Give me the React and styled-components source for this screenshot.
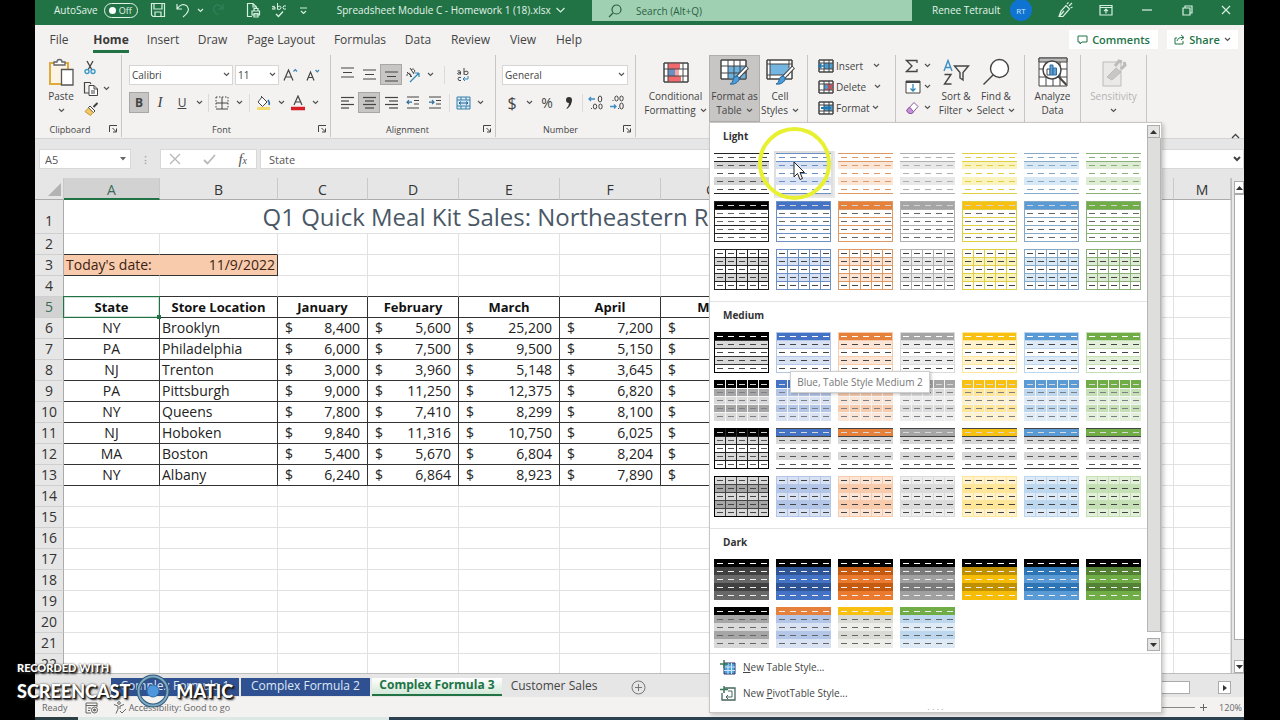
import * as React from 'react';
import styled, { css, createGlobalStyle } from 'styled-components'

const ui = "'Open Sans', 'Noto Sans', sans-serif";

const GlobalStyle = createGlobalStyle`
    * { box-sizing: border-box; }
    body { margin: 0; background: #000; font-family: ${ui}; overflow: hidden; }
    button, input, select { font: inherit; color: inherit; border: 0; padding: 0; margin: 0; background: none; }
`

/* ---------- data ---------- */

const palette = [
    { name: 'Black', c: '#000000', t1: '#d9d9d9', t2: '#a6a6a6', dark: '#404040', mid: '#686868', line: '#222222', soft: '#d4d4d4' },
    { name: 'Blue', c: '#4472c4', t1: '#d9e2f3', t2: '#b4c6e7', dark: '#2f5597', mid: '#4472c4', line: '#6c8fc4', soft: '#d9e2f3' },
    { name: 'Orange', c: '#e5813a', t1: '#fbe5d6', t2: '#f8cbad', dark: '#c55a11', mid: '#e97a30', line: '#dd9a66', soft: '#fbe5d6' },
    { name: 'Gray', c: '#a5a5a5', t1: '#ededed', t2: '#dbdbdb', dark: '#7b7b7b', mid: '#a0a0a0', line: '#b0b0b0', soft: '#e8e8e8' },
    { name: 'Gold', c: '#f8c010', t1: '#fff2cc', t2: '#ffe699', dark: '#bf9000', mid: '#f6bd08', line: '#dfcf45', soft: '#fbf3bd' },
    { name: 'Light Blue', c: '#5b9bd5', t1: '#deebf7', t2: '#bdd7ee', dark: '#2e75b6', mid: '#5b9bd5', line: '#86a9c6', soft: '#d8e9f5' },
    { name: 'Green', c: '#70ad47', t1: '#e2f0d9', t2: '#c5e0b4', dark: '#548235', mid: '#70ad47', line: '#8bb077', soft: '#dfecd5' }
];

const dark2 = [
    { name: 'Black', c: '#000000', t1: '#d9d9d9', t2: '#a6a6a6' },
    { name: 'Blue', c: '#e5813a', t1: '#d9e2f3', t2: '#b4c6e7' },
    { name: 'Gold', c: '#f8c010', t1: '#ededea', t2: '#dbdbd6' },
    { name: 'Green', c: '#70ad47', t1: '#deebf7', t2: '#bdd7ee' }
];

const lookOf = {
    light1: p => ({ rows: ['#fff', p.soft, '#fff', p.soft, '#fff'], dash: p.c === '#000000' ? '#555' : p.line, ends: p.line }),
    light2: p => ({ rows: [p.c, '#fff', '#fff', '#fff', '#fff'], dash: '#666', head: '#d4d4d4', lines: p.line, frame: p.line }),
    light3: p => ({ rows: ['#fff', p.soft, '#fff', p.soft, '#fff'], dash: '#444', lines: p.line, cols: p.line, frame: p.line }),
    medium1: p => ({ rows: [p.c, p.t1, '#fff', p.t1, '#fff'], dash: '#444', head: '#fff', lines: p.c === '#000000' ? '#333' : p.t2, frame: p.c === '#000000' ? p.c : p.t2 }),
    medium2: p => ({ rows: [p.c, p.t2, p.t1, p.t2, p.t1], dash: '#7c8086', head: '#d8d8d8', lines: '#f4f4f4', cols: '#f4f4f4' }),
    medium3: p => p.c === '#000000'
        ? { rows: [p.c, '#d9d9d9', '#fff', '#d9d9d9', '#fff'], dash: '#555', head: '#ccc', lines: '#222', cols: '#222', frame: '#000' }
        : { rows: [p.c, '#d9d9d9', '#fff', '#d9d9d9', '#fff'], dash: '#555', head: '#d8d8d8', ends: '#444' },
    medium4: p => ({ rows: [p.t1, p.t2, p.t1, p.t2, p.t1], dash: '#444', lines: p.c === '#000000' ? '#444' : p.t2, cols: p.c === '#000000' ? '#444' : p.t2, frame: p.c === '#000000' ? '#000' : p.t2 }),
    dark1: p => ({ rows: ['#000', p.dark, p.mid, p.dark, p.mid], dash: '#eee', head: '#fff' }),
    dark2: p => ({ rows: [p.c, p.t2, p.t1, p.t2, p.t1], dash: '#666', head: '#eee' })
};

const gallery = [
    { title: 'Light', kinds: ['light1', 'light2', 'light3'] },
    { title: 'Medium', kinds: ['medium1', 'medium2', 'medium3', 'medium4'] },
    { title: 'Dark', kinds: ['dark1', 'dark2'] }
];

const columns = [
    ['A', 96], ['B', 118], ['C', 90], ['D', 91], ['E', 101], ['F', 101], ['G', 101],
    ['H', 104], ['I', 104], ['J', 68], ['K', 68], ['L', 68], ['M', null]
];

const sales = [
    ['NY', 'Brooklyn', '8,400', '5,600', '25,200', '7,200'],
    ['PA', 'Philadelphia', '6,000', '7,500', '9,500', '5,150'],
    ['NJ', 'Trenton', '3,000', '3,960', '5,148', '3,645'],
    ['PA', 'Pittsburgh', '9,000', '11,250', '12,375', '6,820'],
    ['NY', 'Queens', '7,800', '7,410', '8,299', '8,100'],
    ['NJ', 'Hoboken', '9,840', '11,316', '10,750', '6,025'],
    ['MA', 'Boston', '5,400', '5,670', '6,804', '8,204'],
    ['NY', 'Albany', '6,240', '6,864', '8,923', '7,890']
];

/* ---------- icons ---------- */

const Svg = ({ w = 16, h = w, children, color = '#444', sw = 1, vb }) => (
    <svg width={w} height={h} viewBox={vb || `0 0 ${w} ${h}`} fill='none' stroke={color} strokeWidth={sw} aria-hidden='true'>{children}</svg>
);
const Chevron = ({ color = '#555' }) => <Svg w={7} h={5} color={color} sw={1.2}><path d='M1 1l2.5 2.5L6 1' /></Svg>;
const Bars = ({ rows }) => (
    <Svg w={14} h={14} sw={1.2}>
        {rows.map(([a, b], i) => <path key={i} d={`M${a} ${i * 3.5 + 1.5}H${b}`} />)}
    </Svg>
);
const V3 = ({ top }) => <Svg w={14} h={16} sw={1.2}><path d={`M1 ${top}H14M3 ${top + 4.5}H12M1 ${top + 9}H14`} /></Svg>;

const PasteIcon = () => (
    <Svg w={26} h={28} sw={1.3}>
        <path d='M3 5H20V26H2V5Z' fill='#fbf4e4' stroke='#e0a93c' strokeWidth='2' />
        <path d='M6 7V4h3a2.5 2.5 0 0 1 5 0h3v3Z' fill='#fff' stroke='#666' />
        <path d='M13.500 11.500H25V27H13.500Z' fill='#fff' stroke='#555' />
    </Svg>
);
const CutIcon = () => (
    <Svg w={12} h={15}><path d='M3 1l5 9M9 1L4 10' strokeWidth='1.3' /><circle cx='3' cy='11.500' r='2' stroke='#3c9ac4' strokeWidth='1.400' /><circle cx='9' cy='11.500' r='2' stroke='#3c9ac4' strokeWidth='1.400' /></Svg>
);
const CopyIcon = () => (
    <Svg w={16} h={16}><path d='M6 12H1.500V1.500H7L8 3' strokeWidth='1.200' /><path d='M6 4.500h5l3.500 3.500v6.500H6Z' fill='#fff' /><path d='M11 4.500V8h3.500M8 10h4M8 12h4' /></Svg>
);
const BrushIcon = () => (
    <Svg w={15} h={15}><path d='M13.500 1l-4 4' strokeWidth='2' /><path d='M6 4l5 5-1.500 1.500-5-5Z' fill='#fff' /><path d='M4.500 6L9 10.500 6.500 13.500 1 9.500Z' fill='#f1c96b' stroke='#c9952f' /></Svg>
);
const BordersIcon = () => (
    <Svg w={14} h={14}><path d='M1 1H13V13M1 1V13' strokeDasharray='1.500 1.500' /><path d='M1 13H13M7 1V13M1 7H13' /></Svg>
);
const FillIcon = () => (
    <Svg w={16} h={16}><path d='M6 2L11 7 6.500 11.500 2 7Z' fill='#fff' /><path d='M5 1l3 3' /><path d='M12 5q2 3 1 5' stroke='#2b6fa8' strokeWidth='1.600' /><path d='M1 13.500H14' stroke='#f3dc6d' strokeWidth='3' /></Svg>
);
const FontColorIcon = () => (
    <Svg w={16} h={16}><path d='M4 10L8 1l4 9M5.500 7h5' strokeWidth='1.200' /><path d='M1 13.500H15' stroke='#d61f26' strokeWidth='3.500' /></Svg>
);
const GrowIcon = ({ down }) => (
    <Svg w={16} h={16} sw={1.2}>
        <path d={down ? 'M2 13.500L5.500 5l3.500 8.500M3.200 10.500h4.800' : 'M1 13.500L5.500 3 10 13.500M2.500 10h6'} />
        <path d={down ? 'M10.500 3l1.800 1.800L14 3' : 'M10.500 4.500l1.800-1.800L14 4.500'} stroke='#3a83b5' />
    </Svg>
);
const AngleIcon = () => (
    <Svg w={16} h={16}><path d='M2 9a2 2 0 1 1 3 1M2 5l5 5M6 3a2 2 0 1 1 2 3M5 1l4 6' /><path d='M5 15L14 6M14 6h-4M14 6v4' stroke='#2e86b8' strokeWidth='1.200' /></Svg>
);
const WrapIcon = () => (
    <Svg w={14} h={15}>
        <path d='M1.500 4q3-1 3 1v2.500M4.500 5.500q-3 0-3 1.200t3 0M8 1v6.500M8 5q4-2 4 .8T8 7' />
        <path d='M5 10.500q-3-1-3 1.300T5 13.500' /><path d='M12 9v3H7M9 10l-2 2 2 2' stroke='#2e86b8' />
    </Svg>
);
const IndentIcon = ({ right }) => (
    <Svg w={14} h={13}><path d='M1 1H13M8 4.500H13M8 8H13M1 12H13' /><path d={right ? 'M1 6.200h5M4 4.200l2 2-2 2' : 'M6 6.200H1M3 4.200l-2 2 2 2'} stroke='#2e6f9e' strokeWidth='1.200' /></Svg>
);
const MergeIcon = () => (
    <Svg w={15} h={14}><path d='M1 1H14V13H1Z' fill='#d6ebf7' stroke='#3a7ea8' /><path d='M1 4H14M1 10H14M5 1V4M10 1V4M5 10v3M10 10v3' stroke='#3a7ea8' /><path d='M3 7H12M5 5.500L3 7l2 1.500M10 5.500L12 7l-2 1.500' stroke='#1f5f90' /></Svg>
);
const CommaIcon = () => (
    <Svg w={10} h={14} color='none'><path d='M5 1a3 3 0 0 1 3 3q0 5-5 9l-.5-.8Q5 10 5 7A3 3 0 0 1 5 1Z' fill='#333' /></Svg>
);
const CondIcon = () => (
    <Svg w={26} h={21}>
        <path d='M1 1H25V20H1Z' fill='#fff' /><path d='M5 1H17V7H5ZM5 14H18V20H5Z' fill='#f0696d' stroke='none' /><path d='M5 7H12V14H5Z' fill='#6b8fc0' stroke='none' /><path d='M12 7H16V14H12Z' fill='#f7a5a5' stroke='none' />
        <path d='M1 1H25V20H1ZM5 1V20M20 1V20M1 7H25M1 14H25' />
    </Svg>
);
const TableBrushIcon = ({ cell }) => (
    <Svg w={29} h={27}>
        {cell
            ? <><path d='M1 1H26V20H1Z' fill='#fff' /><path d='M4 5H23V16H4Z' fill='#75b5e2' stroke='none' /><path d='M1 1H26V20H1ZM1 5H26M4 1V20M1 16H23M23 1V9' /></>
            : <><path d='M1 1H26V20H1Z' fill='#fff' /><path d='M8 7H26V20H8Z' fill='#6fb2e0' stroke='none' /><path d='M1 1H26V20H1ZM1 7H26M1 14H26M8 1V20M14 1V20M20 1V20' /></>}
        <path d='M27.500 8L17 19' stroke='#444' strokeWidth='4' /><path d='M27 8.500L17 19' stroke='#fff' strokeWidth='2' />
        <path d='M17 17q3 1 2 4-3 5-9 4 3-1 3-4 1-4 4-4Z' fill='#4b9cd8' stroke='#28699a' />
    </Svg>
);
const CellsIcon = ({ kind }) => (
    <Svg w={16} h={14}>
        <path d='M1 1H15V13H1Z' fill='#fff' /><path d='M6 4H15V10H6Z' fill='#4f9bcd' stroke='none' />
        <path d='M1 1H15V13H1ZM1 4H15M1 10H15M6 1V13M11 1V13' />
        {kind === 'insert' && <path d='M7 7H1M3.500 4.500L1 7l2.500 2.500' stroke='#1f77b4' strokeWidth='1.500' />}
        {kind === 'delete' && <path d='M9 4l6 6M15 4l-6 6' stroke='#d44' strokeWidth='1.600' />}
        {kind === 'format' && <path d='M3 7H13' stroke='#1f77b4' strokeWidth='2' />}
    </Svg>
);
const SumIcon = () => <Svg w={14} h={14} sw={1.3}><path d='M12 4V1.500H1.500L7 7l-5.500 5.500H12V10' /></Svg>;
const FillDownIcon = () => <Svg w={16} h={14}><path d='M1 1H15V13H1Z' fill='#fff' /><path d='M1 2H15' strokeWidth='2' /><path d='M8 4v7M5.500 8.500L8 11l2.500-2.500' stroke='#2e86b8' strokeWidth='1.300' /></Svg>;
const EraserIcon = () => <Svg w={15} h={14}><path d='M9 1.500l4 4-6 7H4L1.500 9.500Z' fill='#fff' stroke='#8a5a9c' /><path d='M4.500 6l4 4.500L7 12.500H4L1.500 9.500Z' fill='#c88fd8' stroke='#8a5a9c' /></Svg>;
const SortIcon = () => (
    <Svg w={28} h={27} sw={1.4}>
        <path d='M2 12L6 1.500 10 12M3.400 8.500h5.200' stroke='#3c8fc4' /><path d='M2.500 15.500H9L2.500 25H9.500' />
        <path d='M12.500 7H26.500L21 13.500V21l-3-2v-5.500Z' />
    </Svg>
);
const FindIcon = () => <Svg w={28} h={28} sw={1.4}><circle cx='17.500' cy='10.500' r='9' fill='#fff' /><path d='M11 17L1.500 26.500' /></Svg>;
const AnalyzeIcon = () => (
    <Svg w={30} h={30}>
        <path d='M1 1H29V29H1Z' fill='#fff' /><path d='M1 1H29V5H1Z' fill='#bbb' /><path d='M1 12H29M1 20H29M8 5V29M15 5V29M22 5V29' />
        <circle cx='14' cy='13' r='9' fill='#fff' strokeWidth='1.500' /><path d='M20 19l8.500 9' strokeWidth='2' />
        <path d='M9 12h3v6H9Z' fill='#fff' /><path d='M12 8h3v10h-3Z' fill='#5e9fd6' stroke='#2f6da3' /><path d='M15 11h3.500v7H15Z' fill='#5e9fd6' stroke='#2f6da3' />
    </Svg>
);
const SensitivityIcon = () => (
    <Svg w={28} h={29} color='#bdbbb9'><path d='M3 4H21V28H3Z' fill='#ebe9e7' /><path d='M7 19l9-9 5 4-9 8Z' fill='#c9c7c5' /><path d='M15 8l4-5 3 1M21 11l4-4-1-3' strokeWidth='3' /></Svg>
);
const LauncherIcon = () => <Svg w={9} h={8}><path d='M.500 7V.500H8M3.500 3l4 4M7.500 3.500V7H4' /></Svg>;
const TitleSvg = ({ d, w = 18, h = 18, color = '#d6efdf' }) => <Svg w={w} h={h} color={color} sw={1.2}><path d={d} /></Svg>;
const RedoIcon = () => <TitleSvg color='#30825a' d='M14 3v5H9M14 8Q9 1 5 6q-2 4 4 8' />;
const FxIcon = () => <FxText>f<sub>x</sub></FxText>;

const Thumb = ({ look, w = 55, h = 41 }) => {
    const { rows, dash, head, lines, cols, frame, ends } = look;
    return <svg width={w} height={h} viewBox='0 0 55 41' shapeRendering='crispEdges' aria-hidden='true'>
        {rows.map((fill, i) => <rect key={i} x='0' y={i * 8} width='55' height={i === 4 ? 9 : 8} fill={fill} />)}
        {lines && [1, 2, 3, 4].map(i => <rect key={i} x='0' y={i * 8} width='55' height='1' fill={lines} />)}
        {cols && [1, 2, 3, 4].map(i => <rect key={i} x={i * 11} y='0' width='1' height='41' fill={cols} />)}
        {rows.map((_, r) => [0, 1, 2, 3, 4].map(i => (
            <rect key={`${r}${i}`} x={i * 11 + 3} y={r * 8 + 4} width='6' height='1' fill={r === 0 && head ? head : dash} />
        )))}
        {ends && [0, 8, 40].map(y => <rect key={y} x='0' y={y} width='55' height='1' fill={ends} />)}
        {frame && <rect x='.5' y='.5' width='54' height='40' fill='none' stroke={frame} />}
    </svg>
};

/* ---------- styled parts ---------- */

const Stage = styled.div`
    height: 100vh;
    padding: 0 36px 0 35px;
    position: relative;
`
const Window = styled.main`
    height: 100%;
    display: flex;
    flex-direction: column;
    background: #e6e6e6;
    color: #444;
    position: relative;
`
const center = css`
    display: flex;
    align-items: center;
    justify-content: center;
`
const TitleBar = styled.header`
    display: flex;
    flex: none;
    height: 25px;
    background: #217346;
    color: #e3f3e9;
    font-size: 10px;
`
const TitleLeft = styled.div`
    display: flex;
    align-items: center;
    height: 20px;
    width: 557px;
    padding-left: 19px;
    white-space: nowrap;
`
const TitleRight = styled(TitleLeft)`
    flex: 1;
    width: auto;
    padding-left: 20px;
`
const TitleBtn = styled.button`
    ${center}
    flex: none;
    height: 20px;
    width: ${p => p.$w || 24}px;
    margin-left: ${p => p.$ml || 0}px;
`
const AutoSave = styled.label`
    display: flex;
    align-items: center;
    gap: 6px;
    font-size: 10px;
    input { position: absolute; opacity: 0; }
`
const Pill = styled.span`
    display: flex;
    align-items: center;
    justify-content: space-between;
    width: 34px;
    height: 15px;
    padding: 0 5px 0 4px;
    border: 1px solid #e3f3e9;
    border-radius: 8px;
    font-size: 9px;
    &::before { content: ''; width: 7px; height: 7px; border-radius: 50%; background: #fff; }
`
const FileName = styled.span`
    margin-left: 21px;
    margin-right: 5px;
`
const SearchBox = styled.label`
    display: flex;
    align-items: center;
    gap: 14px;
    width: 320px;
    height: 21px;
    padding-left: 16px;
    background: #9fd0b2;
    input { flex: 1; font-size: 10px; color: #2b5f43; }
    input::placeholder { color: #2b5f43; opacity: 1; }
`
const UserName = styled.span`
    width: 78px;
`
const Avatar = styled.span`
    ${center}
    width: 22px;
    height: 22px;
    border-radius: 50%;
    background: #0f74d1;
    color: #cfe6ff;
    font-size: 8px;
    margin-right: auto;
`
const MenuBar = styled.nav`
    display: flex;
    flex: none;
    align-items: center;
    height: 29px;
    padding: 0 6px 0 0;
    background: #f3f2f1;
    font-size: 12px;
`
const MenuTab = styled.button`
    height: 29px;
    width: ${p => p.$w}px;
    ${p => p.$active && css`font-weight: 700; color: #3b3a39;`}
    span {
        display: inline-block;
        line-height: 20px;
        border-top: 3px solid transparent;
        border-bottom: 3px solid ${p => p.$active ? '#217346' : 'transparent'};
    }
`
const TopAction = styled.button`
    ${center}
    gap: 4px;
    height: 19px;
    width: ${p => p.$w}px;
    margin-left: ${p => p.$push ? 'auto' : '9px'};
    background: #fff;
    color: #217346;
    font-size: 11px;
    font-weight: 600;
`
const Ribbon = styled.section`
    display: flex;
    flex: none;
    height: 85px;
    padding-top: 1px;
    background: #f3f2f1;
    border-bottom: 1px solid #d4d4d4;
`
const Group = styled.div`
    flex: none;
    display: flex;
    flex-direction: column;
    width: ${p => p.$w}px;
    height: 82px;
    border-right: 1px solid #c8c6c4;
    padding-left: ${p => p.$pl || 0}px;
`
const GroupBody = styled.div`
    display: flex;
    flex: none;
    height: 68px;
`
const GroupFoot = styled.div`
    display: grid;
    grid-template-columns: 1fr 16px;
    align-items: center;
    height: 16px;
    font-size: 9px;
    line-height: 14px;
    text-align: center;
`
const Stack = styled.div`
    display: flex;
    flex-direction: column;
    gap: ${p => p.$gap || 0}px;
    padding-top: ${p => p.$pt || 0}px;
    padding-left: ${p => p.$pl || 0}px;
`
const ToolRow = styled.div`
    display: flex;
    align-items: center;
    height: 21px;
`
const Tool = styled.button`
    ${center}
    flex: none;
    height: 21px;
    width: ${p => p.$w || 22}px;
    font-size: ${p => p.$size || 14}px;
    line-height: 20px;
    ${p => p.$on && css`background: #c8c6c4; box-shadow: inset 0 0 0 1px #a9a7a5;`}
`
const Split = styled.span`
    flex: none;
    width: 1px;
    height: 18px;
    margin: 0 ${p => p.$m || 3}px;
    background: #dcdad8;
`
const Picker = styled.label`
    display: grid;
    flex: none;
    align-items: center;
    width: ${p => p.$w}px;
    height: 20px;
    margin-right: ${p => p.$mr || 0}px;
    background: #fff;
    border: 1px solid #d8d6d4;
    font-size: 10px;
    select, svg { grid-area: 1 / 1; }
    select { appearance: none; width: 100%; padding-left: 2px; outline: 0; }
    svg { justify-self: end; margin-right: 2px; pointer-events: none; }
`
const BigButton = styled.button`
    display: flex;
    flex-direction: column;
    align-items: center;
    flex: none;
    width: ${p => p.$w}px;
    height: 67px;
    padding-left: ${p => p.$pl || 0}px;
    font-size: 10px;
    line-height: 14px;
    white-space: nowrap;
    color: ${p => p.$off ? '#b5b3b1' : '#444'};
    ${p => p.$on && css`background: #c8c6c4; box-shadow: inset 0 0 0 1px #b1afad;`}
`
const IconSlot = styled.span`
    ${center}
    height: 34px;
`
const TextLine = styled.span`
    ${center}
    gap: 4px;
    height: 14px;
`
const CellTool = styled.button`
    display: flex;
    align-items: center;
    gap: 2px;
    height: 21px;
    font-size: 10px;
    svg:last-child { margin-left: ${p => p.$gap}px; }
`
const CollapseBtn = styled.button`
    margin: auto 4px 2px auto;
    height: 14px;
`
const FormulaBar = styled.section`
    display: flex;
    flex: none;
    height: 39px;
    padding: 10px 0 9px 4px;
    font-size: 11px;
    color: #555;
`
const Box = styled.div`
    display: flex;
    align-items: center;
    justify-content: space-between;
    background: #fff;
    border: 1px solid #d8d8d8;
    width: ${p => p.$w}px;
    flex: ${p => p.$grow ? '1' : 'none'};
    padding: 0 ${p => p.$pr || 9}px 0 ${p => p.$pl || 8}px;
    button { ${center} }
    input { flex: 1; min-width: 0; }
`
const Dots = styled.span`
    ${center}
    width: ${p => p.$w}px;
    color: #999;
`
const FxText = styled.span`
    font: italic 15px 'Liberation Serif', serif;
    sub { font-size: 10px; vertical-align: baseline; }
`
const SheetArea = styled.section`
    display: flex;
    flex: 1;
    min-height: 0;
    overflow: hidden;
`
const SheetView = styled.div`
    flex: 1;
    overflow: hidden;
    border-right: 1px solid #bdbdbd;
`
const Sheet = styled.table`
    width: 100%;
    table-layout: fixed;
    border-spacing: 0;
    background: #fff;
    color: #222;
    font-size: 14px;
    line-height: 20px;
`
const HeadCell = styled.th`
    height: ${p => p.$h || 21}px;
    padding: 0;
    font-weight: 400;
    background: ${p => p.$on ? '#d2d2d2' : '#e6e6e6'};
    color: ${p => p.$on ? '#3b6b57' : '#333'};
    border-right: 1px solid ${p => p.$side ? '#ababab' : '#c9c9c9'};
    border-bottom: 1px solid ${p => p.$side ? '#cfcfcf' : '#ababab'};
    ${p => p.$top && css`vertical-align: bottom; line-height: 18px;`}
    ${p => p.$on && !p.$side && css`border-bottom: 2px solid #217346; line-height: 17px;`}
    ${p => p.$tall && css`vertical-align: bottom; padding-bottom: 2px;`}
    svg { display: block; margin: 4px 2px 2px auto; }
`
const Cell = styled.td`
    padding: 0 2px;
    white-space: nowrap;
    text-align: ${p => p.$align || 'left'};
    border-right: 1px solid ${p => p.$right || p.$box ? '#333' : '#e1e1e1'};
    border-bottom: 1px solid ${p => p.$bottom || p.$box ? '#333' : '#e1e1e1'};
    ${p => p.$peach && css`background: #f8cbad; color: #3c2313;`}
    ${p => p.$bold && css`font-weight: 700; font-size: 13px; color: #111;`}
`
const SheetTitle = styled(Cell)`
    font-size: 24px;
    line-height: 32px;
    color: #4a5866;
    text-align: center;
`
const ActiveCell = styled(Cell)`
    position: relative;
    &::before { content: ''; position: absolute; inset: -1px; border: 1px solid #217346; box-shadow: inset 0 0 0 1px #cfe0d7; }
    &::after { content: ''; position: absolute; right: -2px; bottom: -2px; width: 4px; height: 4px; background: #217346; }
`
const Money = styled.div`
    display: flex;
    justify-content: space-between;
    padding: 0 5px;
`
const ScrollBar = styled.div`
    display: flex;
    flex-direction: column;
    width: 12px;
    padding: 3px 0 0 2px;
    background: #e6e6e6;
`
const ScrollBtn = styled.button`
    ${center}
    flex: none;
    width: ${p => p.$w || 13}px;
    height: 13px;
    border: 1px solid #ababab;
    background: ${p => p.$bg || '#fff'};
`
const ScrollThumb = styled.div`
    flex: 1;
    background: #fff;
    border: 1px solid #ababab;
    border-right: 0;
    margin-bottom: 20px;
`
const SheetTabs = styled.footer`
    display: flex;
    flex: none;
    align-items: flex-start;
    gap: 2px;
    height: 24px;
    padding: 4px 13px 0 76px;
    border-top: 1px solid #bdbdbd;
    font-size: 12px;
`
const SheetTab = styled.button`
    height: 18px;
    width: ${p => p.$w}px;
    line-height: 14px;
    padding-bottom: 2px;
    white-space: nowrap;
    ${p => p.$tone === 'blue' && css`background: #2f5191; color: #dfe8f7;`}
    ${p => p.$tone === 'active' && css`
        background: linear-gradient(#fff, #d3e8d9);
        color: #217346;
        font-weight: 700;
        border-bottom: 2px solid #217346;
    `}
`
const AddTab = styled.button`
    ${center}
    margin: 2px 0 0 25px;
`
const HScroll = styled.div`
    display: flex;
    justify-content: space-between;
    width: 70px;
    margin: 3px 0 0 auto;
`
const HThumb = styled.div`
    width: 29px;
    height: 13px;
    background: #fff;
    border: 1px solid #ababab;
`
const StatusBar = styled.footer`
    display: flex;
    flex: none;
    align-items: center;
    height: 19px;
    padding: 2px 2px 0 7px;
    background: #f3f2f1;
    font-size: 9px;
    color: #666;
`
const StatusItem = styled.span`
    display: flex;
    align-items: center;
    gap: 2px;
    margin-right: ${p => p.$mr || 0}px;
`
const ZoomLine = styled.span`
    width: 60px;
    height: 1px;
    margin: 0 5px 0 auto;
    background: #888;
`
const TaskBar = styled.div`
    flex: none;
    height: 4px;
    background: linear-gradient(90deg, #2b3f45 43px, #dce8e4 43px, #dce8e4 354px, #2c4150 354px);
    border-top: 1px solid #f3f2f1;
`
const GalleryPanel = styled.aside`
    position: absolute;
    top: 122px;
    left: 674px;
    width: 453px;
    background: #fff;
    border: 1px solid #c8c6c4;
    box-shadow: 2px 2px 4px rgba(0, 0, 0, 0.2);
`
const GalleryScroll = styled.div`
    display: grid;
    grid-template-columns: 1fr 14px;
    border-bottom: 1px solid #dedede;
`
const Section = styled.section`
    padding: 0 4px ${p => p.$last ? 5 : 11}px;
    border-bottom: ${p => p.$last ? 0 : '1px solid #e3e3e3'};
`
const SectionTitle = styled.h2`
    height: 30px;
    margin: 0;
    padding-left: 9px;
    font-size: 10px;
    font-weight: 700;
    line-height: 27px;
    color: #333;
`
const ThumbRow = styled.div`
    display: grid;
    grid-template-columns: repeat(7, 55px);
    gap: 7px;
    margin-bottom: 7px;
    &:last-child { margin-bottom: 0; }
`
const ThumbBtn = styled.button`
    display: block;
    height: 41px;
    line-height: 0;
    ${p => p.$hover && css`outline: 2px solid #dfdfdf; box-shadow: 1px 1px 0 3px #e8e8e8;`}
`
const PanelScroll = styled.div`
    display: flex;
    flex-direction: column;
    padding-top: 2px;
    padding-bottom: 2px;
`
const PanelThumb = styled.div`
    flex: 1;
    margin-bottom: 6px;
    background: #dededc;
    border: 1px solid #b5b5b5;
    border-top: 0;
`
const PanelItem = styled.button`
    display: flex;
    align-items: center;
    gap: 7px;
    width: 100%;
    height: 26px;
    padding-left: 10px;
    font-size: 10px;
    color: #444;
`
const Grip = styled.div`
    height: 6px;
    line-height: 2px;
    text-align: center;
    font-size: 9px;
    color: #aaa;
`
const Tooltip = styled.div`
    ${center}
    position: absolute;
    top: 371px;
    left: 755px;
    width: 140px;
    height: 22px;
    background: #fff;
    border: 1px solid #cfcfcf;
    box-shadow: 1px 1px 3px rgba(0, 0, 0, 0.25);
    font-size: 10px;
    color: #777;
    white-space: nowrap;
`
const Ring = styled.div`
    position: absolute;
    top: 127px;
    left: 723px;
    width: 73px;
    height: 73px;
    border: 4px solid #e8f032;
    border-radius: 50%;
`
const Pointer = styled.div`
    position: absolute;
    top: 161px;
    left: 758px;
    line-height: 0;
`
const Watermark = styled.div`
    position: absolute;
    left: 17px;
    bottom: 13px;
    color: #fff;
    font-family: Lato, sans-serif;
    font-weight: 900;
    text-shadow: 1px 1px 1px #111, 2px 2px 2px #222, 0 0 2px #333;
`
const WatermarkTop = styled.div`
    font-size: 11px;
    line-height: 14px;
`
const WatermarkMain = styled.div`
    display: flex;
    align-items: center;
    gap: 6px;
    height: 32px;
    font-size: 18px;
`

/* ---------- pieces ---------- */

const RibbonGroup = ({ w, pl, label, launcher, children }) => (
    <Group $w={w} $pl={pl}>
        <GroupBody>{children}</GroupBody>
        {label && <GroupFoot><span>{label}</span>{launcher && <button aria-label={`${label} settings`}><LauncherIcon /></button>}</GroupFoot>}
    </Group>
);

const Big = ({ icon, lines, chevron, ...rest }) => (
    <BigButton {...rest}>
        <IconSlot>{icon}</IconSlot>
        {lines.map((line, i) => <TextLine key={i}>{line}{chevron && i === lines.length - 1 && <Chevron />}</TextLine>)}
    </BigButton>
);

const RibbonTabs = [['File', 48], ['Home', 56], ['Insert', 48], ['Draw', 51], ['Page Layout', 86], ['Formulas', 72], ['Data', 44], ['Review', 61], ['View', 44], ['Help', 48]];

const Title = () => (
    <TitleBar>
        <TitleLeft>
            <AutoSave><span>AutoSave</span><input type='checkbox' /><Pill>Off</Pill></AutoSave>
            <TitleBtn $ml={8} aria-label='Save'><TitleSvg w={16} h={16} d='M1.500 1.500H14.500V14.500H3L1.500 13ZM4 1.500V7H12V1.500M5 14.500V10H11V14.500' /></TitleBtn>
            <TitleBtn $w={26} aria-label='Undo'><TitleSvg w={16} h={16} d='M2 2v5H7M2 7Q7 0 12 4q4 5-4 11' /></TitleBtn>
            <TitleBtn $w={10} aria-label='Undo list'><Chevron color='#d6efdf' /></TitleBtn>
            <TitleBtn aria-label='Redo'><RedoIcon /></TitleBtn>
            <TitleBtn $ml={12} aria-label='Print preview'><TitleSvg w={15} h={16} d='M6 14.500H1.500V1.500H7L10.500 5V7M7 1.500V5H10M6 9H13.500V13H6ZM8 9V6.500H12V9M8 11.500H12V15H8Z' /></TitleBtn>
            <TitleBtn $w={26} aria-label='Spelling'>
                <Svg w={16} h={16} color='#d6efdf'><path d='M1 4.500q3-1 3 1V7.500M4 5.500q-3 .5-3 1.300t3 0M6.500 1v6.500M6.500 4.500q4-1 3.500 1.500T6.500 7M15 4q-3-1-3 1.500T15 7' /><path d='M5 12l2.500 2.500L12 9.500' strokeWidth='1.400' /></Svg>
            </TitleBtn>
            <TitleBtn aria-label='Customize toolbar'><TitleSvg w={9} h={9} d='M1 2H8M2 5l2.500 2.500L7 5' /></TitleBtn>
            <FileName>Spreadsheet Module C - Homework 1 (18).xlsx</FileName>
            <Svg w={9} h={6} color='#d6efdf' sw={1.2}><path d='M.500 1l4 4 4-4' /></Svg>
        </TitleLeft>
        <SearchBox>
            <Svg w={14} h={14} color='#2b5f43' sw={1.2}><circle cx='8.500' cy='5.500' r='4.500' /><path d='M5 9L1 13' /></Svg>
            <input aria-label='Search' placeholder='Search (Alt+Q)' />
        </SearchBox>
        <TitleRight>
            <UserName>Renee Tetrault</UserName>
            <Avatar>RT</Avatar>
            <TitleBtn $w={41} aria-label='Pen'><TitleSvg w={16} h={16} d='M9 3.500L12.500 7 6 14.500H2L4 9ZM2.500 14L7 9M10 2l1.500-1.500M12 4l3-3M13.500 6l2-1' /></TitleBtn>
            <TitleBtn $w={41} aria-label='Ribbon display'><TitleSvg w={14} h={12} d='M1 1.500H13V11H1ZM1 3.500H13M7 9.500V5.500M5 7.200L7 5.200 9 7.200' /></TitleBtn>
            <TitleBtn $w={41} aria-label='Minimize'><TitleSvg w={10} h={10} d='M0 5H10' /></TitleBtn>
            <TitleBtn $w={41} aria-label='Restore'><TitleSvg w={11} h={11} d='M1 3H8V10H1ZM3 3V1H10V8H8' /></TitleBtn>
            <TitleBtn $w={36} aria-label='Close'><TitleSvg w={10} h={10} d='M1 1L9 9M9 1L1 9' /></TitleBtn>
        </TitleRight>
    </TitleBar>
);

const Menu = () => (
    <MenuBar>
        {RibbonTabs.map(([name, w]) => <MenuTab key={name} $w={w} $active={name === 'Home'}><span>{name}</span></MenuTab>)}
        <TopAction $w={89} $push><Svg w={11} h={10} color='#217346'><path d='M1 1H10V7H5L3 9V7H1Z' /></Svg>Comments</TopAction>
        <TopAction $w={71}>
            <Svg w={11} h={11} color='#217346'><path d='M3 4H1V10H9V7M3 7Q4 3 9.500 3.500M7 1l3 2.500L7 6' /></Svg>Share<Chevron />
        </TopAction>
    </MenuBar>
);

const RibbonBar = () => (
    <Ribbon>
        <RibbonGroup w={87} label='Clipboard' launcher>
            <BigButton $w={48} $pl={4}>
                <IconSlot><PasteIcon /></IconSlot>
                <TextLine>Paste</TextLine>
                <TextLine><Chevron /></TextLine>
            </BigButton>
            <Stack $pt={2}>
                <ToolRow><Tool aria-label='Cut' $w={14}><CutIcon /></Tool></ToolRow>
                <ToolRow><Tool aria-label='Copy' $w={16}><CopyIcon /></Tool><Tool aria-label='Copy options' $w={14}><Chevron /></Tool></ToolRow>
                <ToolRow><Tool aria-label='Format painter' $w={16}><BrushIcon /></Tool></ToolRow>
            </Stack>
        </RibbonGroup>

        <RibbonGroup w={209} pl={7} label='Font' launcher>
            <Stack $pt={9} $gap={7}>
                <ToolRow>
                    <Picker $w={104} $mr={2}><select aria-label='Font'><option>Calibri</option></select><Chevron /></Picker>
                    <Picker $w={44} $mr={1}><select aria-label='Font size'><option>11</option></select><Chevron /></Picker>
                    <Tool aria-label='Increase font size'><GrowIcon /></Tool>
                    <Tool aria-label='Decrease font size'><GrowIcon down /></Tool>
                </ToolRow>
                <ToolRow>
                    <Tool $w={20} $on $size={12}><b>B</b></Tool>
                    <Tool $size={12}><FxText>I</FxText></Tool>
                    <Tool $size={12}><u>U</u></Tool>
                    <Tool aria-label='Underline options' $w={12}><Chevron /></Tool>
                    <Split />
                    <Tool aria-label='Borders' $w={20}><BordersIcon /></Tool>
                    <Tool aria-label='Border options' $w={14}><Chevron /></Tool>
                    <Split />
                    <Tool aria-label='Fill color'><FillIcon /></Tool>
                    <Tool aria-label='Fill options' $w={12}><Chevron /></Tool>
                    <Tool aria-label='Font color'><FontColorIcon /></Tool>
                    <Tool aria-label='Font color options' $w={12}><Chevron /></Tool>
                </ToolRow>
            </Stack>
        </RibbonGroup>

        <RibbonGroup w={165} pl={5} label='Alignment' launcher>
            <Stack $pt={9} $gap={7}>
                <ToolRow>
                    <Tool aria-label='Top align'><V3 top={1} /></Tool>
                    <Tool aria-label='Middle align'><V3 top={3} /></Tool>
                    <Tool aria-label='Bottom align' $on><V3 top={5} /></Tool>
                    <Tool aria-label='Orientation'><AngleIcon /></Tool>
                    <Tool aria-label='Orientation options' $w={12}><Chevron /></Tool>
                    <Split $m={8} />
                    <Tool aria-label='Wrap text' $w={20}><WrapIcon /></Tool>
                </ToolRow>
                <ToolRow>
                    <Tool aria-label='Align left'><Bars rows={[[1, 14], [1, 9], [1, 14], [1, 9]]} /></Tool>
                    <Tool aria-label='Center' $on><Bars rows={[[1, 14], [3, 12], [1, 14], [3, 12]]} /></Tool>
                    <Tool aria-label='Align right'><Bars rows={[[1, 14], [5, 14], [1, 14], [5, 14]]} /></Tool>
                    <Tool aria-label='Decrease indent'><IndentIcon /></Tool>
                    <Tool aria-label='Increase indent'><IndentIcon right /></Tool>
                    <Split />
                    <Tool aria-label='Merge and center' $w={20}><MergeIcon /></Tool>
                    <Tool aria-label='Merge options' $w={14}><Chevron /></Tool>
                </ToolRow>
            </Stack>
        </RibbonGroup>

        <RibbonGroup w={140} pl={6} label='Number' launcher>
            <Stack $pt={9} $gap={7}>
                <ToolRow><Picker $w={126}><select aria-label='Number format'><option>General</option></select><Chevron /></Picker></ToolRow>
                <ToolRow>
                    <Tool $w={20} $size={16}>$</Tool>
                    <Tool aria-label='Currency options' $w={14}><Chevron /></Tool>
                    <Tool>%</Tool>
                    <Tool aria-label='Comma style'><CommaIcon /></Tool>
                    <Split $m={2} />
                    <Tool aria-label='Increase decimal'>
                        <Svg w={16} h={15}><path d='M7 4H1M3 2L1 4l2 2' stroke='#3c8fc4' strokeWidth='1.300' /><ellipse cx='12' cy='4' rx='1.800' ry='3' /><ellipse cx='7' cy='11.500' rx='1.700' ry='2.500' /><ellipse cx='12.500' cy='11.500' rx='1.700' ry='2.500' /><path d='M3 13.500h1' /></Svg>
                    </Tool>
                    <Tool aria-label='Decrease decimal' $w={20}>
                        <Svg w={16} h={15}><path d='M1 11.500H7M5 9.500l2 2-2 2' stroke='#3c8fc4' strokeWidth='1.300' /><ellipse cx='7.500' cy='3.500' rx='1.700' ry='2.500' /><ellipse cx='12.500' cy='3.500' rx='1.700' ry='2.500' /><ellipse cx='12.500' cy='11' rx='1.800' ry='3' /><path d='M3.500 5.500h1M9 13.500h1' /></Svg>
                    </Tool>
                </ToolRow>
            </Stack>
        </RibbonGroup>

        <RibbonGroup w={172} pl={6}>
            <Big $w={67} icon={<CondIcon />} lines={['Conditional', 'Formatting']} chevron />
            <Big $w={51} $on icon={<TableBrushIcon />} lines={['Format as', 'Table']} chevron />
            <Big $w={40} icon={<TableBrushIcon cell />} lines={['Cell', 'Styles']} chevron />
        </RibbonGroup>

        <RibbonGroup w={88} pl={10}>
            <Stack>
                <CellTool $gap={8}><CellsIcon kind='insert' />Insert<Chevron /></CellTool>
                <CellTool $gap={6}><CellsIcon kind='delete' />Delete<Chevron /></CellTool>
                <CellTool $gap={0}><CellsIcon kind='format' />Format<Chevron /></CellTool>
            </Stack>
        </RibbonGroup>

        <RibbonGroup w={129} pl={9}>
            <Stack>
                <CellTool $gap={3} aria-label='AutoSum'><SumIcon /><Chevron /></CellTool>
                <CellTool $gap={1} aria-label='Fill'><FillDownIcon /><Chevron /></CellTool>
                <CellTool $gap={2} aria-label='Clear'><EraserIcon /><Chevron /></CellTool>
            </Stack>
            <Stack $pl={5}><Big $w={40} icon={<SortIcon />} lines={['Sort &', 'Filter']} chevron /></Stack>
            <Big $w={40} icon={<FindIcon />} lines={['Find &', 'Select']} chevron />
        </RibbonGroup>

        <RibbonGroup w={56}><Big $w={55} icon={<AnalyzeIcon />} lines={['Analyze', 'Data']} /></RibbonGroup>
        <RibbonGroup w={66}><Big $w={65} $off icon={<SensitivityIcon />} lines={['Sensitivity', '']} chevron /></RibbonGroup>
        <CollapseBtn aria-label='Collapse ribbon'><Svg w={9} h={6} sw={1.3}><path d='M1 5l3.500-3.500L8 5' /></Svg></CollapseBtn>
    </Ribbon>
);

const Formula = () => (
    <FormulaBar>
        <Box $w={92} $pl={5} $pr={4}><input aria-label='Name box' defaultValue='A5' /><Svg w={6} h={4} color='none'><path d='M0 0H6L3 3.500Z' fill='#666' /></Svg></Box>
        <Dots $w={29}>⁝</Dots>
        <Box $w={97}>
            <button aria-label='Cancel'><Svg w={12} h={12} color='#b9b9b9' sw={1.4}><path d='M1 1L11 11M11 1L1 11' /></Svg></button>
            <button aria-label='Enter'><Svg w={13} h={11} color='#b9b9b9' sw={1.8}><path d='M1 6l3.500 3.500L12 1' /></Svg></button>
            <button aria-label='Insert function'><FxIcon /></button>
        </Box>
        <Dots $w={3} />
        <Box $grow $pr={2}><input aria-label='Formula bar' defaultValue='State' /><Svg w={8} h={6} sw={2}><path d='M1 1l3 3 3-3' /></Svg></Box>
    </FormulaBar>
);

const BlankCells = ({ n, bottom }) => Array.from({ length: n }, (_, i) => <Cell key={i} $bottom={bottom && i < bottom} />);
const RowHead = ({ n, ...rest }) => <HeadCell scope='row' $side {...rest}>{n}</HeadCell>;

const Grid = () => (
    <Sheet>
        <colgroup>
            <col style={{ width: 29 }} />
            {columns.map(([name, w]) => <col key={name} style={w ? { width: w } : undefined} />)}
        </colgroup>
        <thead>
            <tr>
                <HeadCell $h={22} aria-label='Select all'><Svg w={13} h={13} color='none'><path d='M13 0V13H0Z' fill='#b3b3b3' /></Svg></HeadCell>
                {columns.map(([name]) => <HeadCell key={name} $h={22} $top $on={name === 'A'}>{name}</HeadCell>)}
            </tr>
        </thead>
        <tbody>
            <tr><RowHead n={1} $h={34} $tall /><SheetTitle colSpan={9}>Q1 Quick Meal Kit Sales: Northeastern Region</SheetTitle><BlankCells n={4} /></tr>
            <tr><RowHead n={2} /><BlankCells n={13} bottom={2} /></tr>
            <tr>
                <RowHead n={3} />
                <Cell $peach $bottom style={{ borderRightColor: '#f8cbad' }}>Today's date:</Cell>
                <Cell $peach $bottom $right $align='right'>11/9/2022</Cell>
                <BlankCells n={11} />
            </tr>
            <tr><RowHead n={4} /><BlankCells n={13} bottom={7} /></tr>
            <tr>
                <RowHead n={5} $on />
                <ActiveCell $box $bold $align='center'>State</ActiveCell>
                {['Store Location', 'January', 'February', 'March', 'April', 'May'].map(t => <Cell key={t} $box $bold $align='center'>{t}</Cell>)}
                <BlankCells n={6} />
            </tr>
            {sales.map(([state, city, ...nums], i) => (
                <tr key={city}>
                    <RowHead n={i + 6} />
                    <Cell $box $align='center'>{state}</Cell>
                    <Cell $box>{city}</Cell>
                    {nums.map((v, k) => <Cell key={k} $box><Money><span>$</span><span>{v}</span></Money></Cell>)}
                    <Cell $box><Money>$</Money></Cell>
                    <BlankCells n={6} />
                </tr>
            ))}
            {Array.from({ length: 9 }, (_, i) => <tr key={i}><RowHead n={i + 14} /><BlankCells n={13} /></tr>)}
        </tbody>
    </Sheet>
);

const Arrow = ({ d }) => <Svg w={7} h={6} color='none'><path d={d} fill='#333' /></Svg>;
const up = 'M0 5H7L3.500 1Z', down = 'M0 1H7L3.500 5Z', right = 'M2 0V6L6 3Z';

const Gallery = () => (
    <GalleryPanel>
        <GalleryScroll>
            <div>
                {gallery.map(({ title, kinds }) => (
                    <Section key={title} $last={title === 'Dark'}>
                        <SectionTitle>{title}</SectionTitle>
                        {kinds.map(kind => (
                            <ThumbRow key={kind}>
                                {(kind === 'dark2' ? dark2 : palette).map(p => (
                                    <ThumbBtn key={p.name} aria-label={`${p.name} ${kind}`} $hover={kind === 'light1' && p.name === 'Blue'}>
                                        <Thumb look={lookOf[kind](p)} />
                                    </ThumbBtn>
                                ))}
                            </ThumbRow>
                        ))}
                    </Section>
                ))}
            </div>
            <PanelScroll>
                <ScrollBtn $bg='#e4e4e2' aria-label='Scroll up'><Arrow d={up} /></ScrollBtn>
                <PanelThumb />
                <ScrollBtn $bg='#e4e4e2' aria-label='Scroll down'><Arrow d={down} /></ScrollBtn>
            </PanelScroll>
        </GalleryScroll>
        <PanelItem>
            <Svg w={16} h={15}><path d='M4 3H15V14H4Z' fill='#4fa3dc' stroke='#336' /><path d='M8 3V14M11.500 3V14M4 7H15M4 10.500H15' stroke='#cfe6f7' /><path d='M4 0V8M0 4H8' stroke='#3b7a5a' strokeWidth='1.500' /></Svg>
            <span><u>N</u>ew Table Style...</span>
        </PanelItem>
        <PanelItem>
            <Svg w={16} h={15}><path d='M4 2H15V14H2V7' fill='#fff' stroke='#47665a' strokeWidth='1.300' /><path d='M8 5H12V11H6M8 9l-2 2 2 2' stroke='#47665a' /><path d='M4 0V7M0 3.500H8' stroke='#3b7a5a' strokeWidth='1.500' /></Svg>
            <span>New <u>P</u>ivotTable Style...</span>
        </PanelItem>
        <Grip>. . . .</Grip>
    </GalleryPanel>
);

export default class App extends React.Component {
    render() {
        return <Stage>
            <GlobalStyle />
            <Window>
                <Title />
                <Menu />
                <RibbonBar />
                <Formula />
                <SheetArea>
                    <SheetView><Grid /></SheetView>
                    <ScrollBar>
                        <ScrollBtn aria-label='Row up' $w={10}><Arrow d={up} /></ScrollBtn>
                        <ScrollThumb />
                        <ScrollBtn aria-label='Row down' $w={10}><Arrow d={down} /></ScrollBtn>
                    </ScrollBar>
                </SheetArea>
                <SheetTabs>
                    <SheetTab $w={128} $tone='blue'>Complex Formula 1</SheetTab>
                    <SheetTab $w={129} $tone='blue'>Complex Formula 2</SheetTab>
                    <SheetTab $w={130} $tone='active'>Complex Formula 3</SheetTab>
                    <SheetTab $w={100}>Customer Sales</SheetTab>
                    <AddTab aria-label='New sheet'><Svg w={15} h={15} color='#777'><circle cx='7.500' cy='7.500' r='6.500' /><path d='M7.500 4V11M4 7.500H11' /></Svg></AddTab>
                    <HScroll><HThumb /><ScrollBtn aria-label='Scroll right'><Arrow d={right} /></ScrollBtn></HScroll>
                </SheetTabs>
                <StatusBar>
                    <StatusItem $mr={17}>Ready</StatusItem>
                    <StatusItem $mr={14}><Svg w={14} h={12} color='#666'><path d='M6 11H1V1H12V5M1 3.500H12M3 6H6M3 8.500H5' /><circle cx='9.500' cy='8' r='3' /><circle cx='9.500' cy='8' r='1' fill='#666' /></Svg></StatusItem>
                    <StatusItem><Svg w={14} h={13} color='#666'><circle cx='6' cy='2' r='1.300' /><path d='M1 3.500l4 1.500v3L3 12.500M11 3.500L7 5v3M7 10l2 2 4-4' /></Svg>Accessibility: Good to go</StatusItem>
                    <ZoomLine />
                    <StatusItem $mr={12}><Svg w={7} h={7} color='#666'><path d='M3.500 0V7M0 3.500H7' /></Svg></StatusItem>
                    <StatusItem>120%</StatusItem>
                </StatusBar>
                <TaskBar />
                <Gallery />
                <Tooltip>Blue, Table Style Medium 2</Tooltip>
                <Ring />
                <Pointer><Svg w={13} h={20} color='#222'><path d='M1 1V16L4.500 12.500 7 18.500 9.500 17.500 7 11.500H11.500Z' fill='#fff' /></Svg></Pointer>
            </Window>
            <Watermark>
                <WatermarkTop>RECORDED WITH</WatermarkTop>
                <WatermarkMain>
                    <span>SCREENCAST</span>
                    <Svg w={34} h={34}><circle cx='17' cy='17' r='14.500' stroke='#2e5672' strokeWidth='4' /><circle cx='17' cy='17' r='14.500' stroke='#7ba9c6' strokeWidth='2' /><circle cx='17' cy='17' r='6' fill='#4e97dd' stroke='#2f6ea8' /></Svg>
                    <span>MATIC</span>
                </WatermarkMain>
            </Watermark>
        </Stage>;
    }
}
